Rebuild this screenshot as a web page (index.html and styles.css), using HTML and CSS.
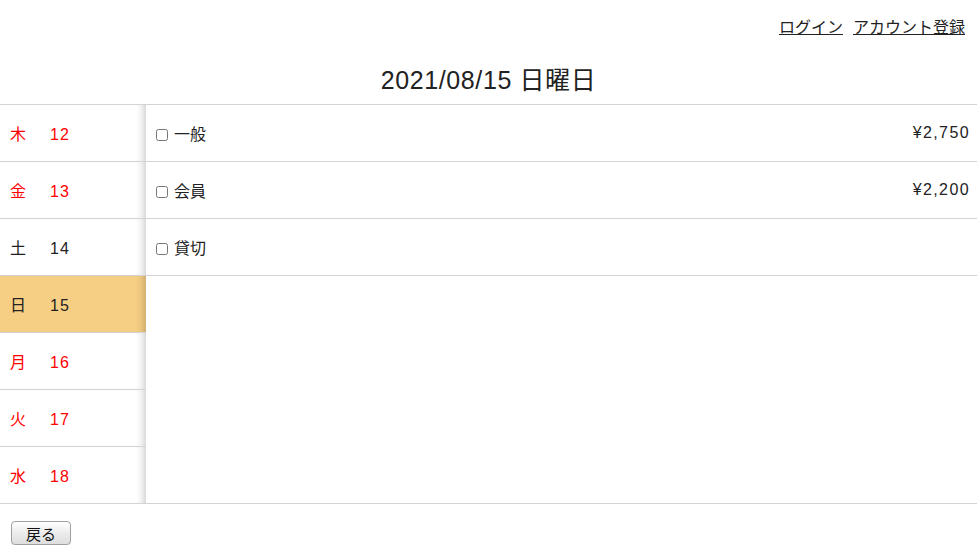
FILE: index.html
```html
<!DOCTYPE html>
<html lang="ja">
<head>
<meta charset="utf-8">
<title>2021/08/15 日曜日</title>
<link rel="stylesheet" href="styles.css">
</head>
<body>
<header class="top">
  <a href="#" class="toplink">ログイン</a>
  <a href="#" class="toplink">アカウント登録</a>
</header>
<h1 class="title">2021/08/15 日曜日</h1>
<main class="board">
  <ul class="days">
    <li class="day red"><span class="dw">木</span><span class="dn">12</span></li>
    <li class="day red"><span class="dw">金</span><span class="dn">13</span></li>
    <li class="day"><span class="dw">土</span><span class="dn">14</span></li>
    <li class="day current"><span class="dw">日</span><span class="dn">15</span></li>
    <li class="day red"><span class="dw">月</span><span class="dn">16</span></li>
    <li class="day red"><span class="dw">火</span><span class="dn">17</span></li>
    <li class="day red last"><span class="dw">水</span><span class="dn">18</span></li>
  </ul>
  <div class="plans">
    <label class="plan"><span class="pl"><input type="checkbox" class="cb"><span>一般</span></span><span class="price">¥2,750</span></label>
    <label class="plan"><span class="pl"><input type="checkbox" class="cb"><span>会員</span></span><span class="price">¥2,200</span></label>
    <label class="plan"><span class="pl"><input type="checkbox" class="cb"><span>貸切</span></span><span class="price"></span></label>
  </div>
</main>
<footer class="foot">
  <button class="back" type="button">戻る</button>
</footer>
</body>
</html>
```
FILE: styles.css
```css
* { box-sizing: border-box; }
html, body { margin: 0; padding: 0; background: #fff; }
body {
  font-family: "Liberation Sans", "Noto Sans CJK JP", sans-serif;
  color: #222;
  font-size: 16px;
}
.top {
  height: 56px;
  display: flex;
  justify-content: flex-end;
  align-items: flex-start;
  gap: 10px;
  padding: 18px 12px 0 0;
}
.toplink {
  color: #222;
  font-size: 16px;
  line-height: 20px;
  text-decoration: underline;
}
.title {
  margin: 0;
  height: 48px;
  line-height: 48px;
  text-align: center;
  font-size: 25px;
  letter-spacing: 0.6px;
  font-weight: normal;
  color: #222;
}
.board {
  display: flex;
  border-top: 1px solid #d4d4d4;
  border-bottom: 1px solid #d4d4d4;
}
.days {
  list-style: none;
  margin: 0;
  padding: 0;
  width: 146px;
  flex: none;
}
.day {
  height: 57px;
  line-height: 56px;
  border-bottom: 1px solid #d4d4d4;
  padding-left: 10px;
  box-shadow: inset -9px 0 8px -7px rgba(0,0,0,0.22);
  color: #222;
  font-size: 16px;
}
.day.last { border-bottom: none; height: 56px; }
.day.red { color: #ff0000; }
.day.current { background: #f6cf84; }
.dw { display: inline-block; width: 40px; vertical-align: -2px; }
.dn { letter-spacing: 1px; vertical-align: -2px; }
.plans {
  flex: 1;
  display: flex;
  flex-direction: column;
}
.plan {
  height: 57px;
  border-bottom: 1px solid #d4d4d4;
  display: flex;
  align-items: center;
  justify-content: space-between;
  padding: 0 8px 0 10px;
  font-size: 16px;
}
.pl { display: flex; align-items: center; gap: 6px; }
.cb { margin: 3px 0 0 0; width: 12px; height: 12px; }
.price { font-size: 16px; letter-spacing: 1.4px; margin-right: -1px; }
.foot {
  padding: 17px 0 0 11px;
}
.back {
  width: 60px;
  height: 24px;
  font-family: "Liberation Sans", "Noto Sans CJK JP", sans-serif;
  font-size: 15px;
  color: #111;
  border: 1px solid #a0a0a0;
  border-radius: 4px;
  background: linear-gradient(#ffffff, #ececec 50%, #dedede);
  padding: 0;
  box-shadow: 0 1px 1px rgba(0,0,0,0.1);
}
```
